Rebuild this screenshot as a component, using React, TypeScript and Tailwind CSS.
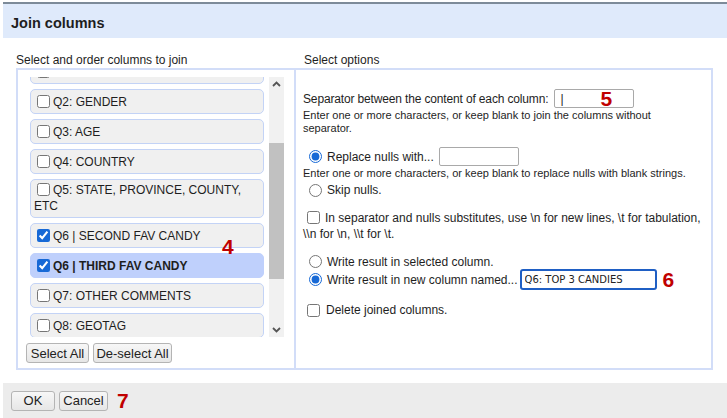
import type { ReactNode } from 'react';

type Column = {
  id: string;
  label: ReactNode;
  checked?: boolean;
  selected?: boolean;
  tall?: boolean;
};

// first row is scrolled mostly out of view, only its checkbox edge shows
const columns: Column[] = [
  { id: 'q1', label: '' },
  { id: 'q2', label: 'Q2: GENDER' },
  { id: 'q3', label: 'Q3: AGE' },
  { id: 'q4', label: 'Q4: COUNTRY' },
  { id: 'q5', label: <>Q5: STATE, PROVINCE, COUNTY,<br />ETC</>, tall: true },
  { id: 'q6b', label: 'Q6 | SECOND FAV CANDY', checked: true },
  { id: 'q6c', label: 'Q6 | THIRD FAV CANDY', checked: true, selected: true },
  { id: 'q7', label: 'Q7: OTHER COMMENTS' },
  { id: 'q8', label: 'Q8: GEOTAG' },
];

const Check = ({ checked = false, className = '' }: { checked?: boolean; className?: string }) => (
  <input
    type="checkbox"
    defaultChecked={checked}
    className={`m-0 w-[13px] h-[13px] shrink-0 accent-[#1769d6] ${className}`}
  />
);

const Radio = ({ checked = false, name }: { checked?: boolean; name: string }) => (
  <input
    type="radio"
    name={name}
    defaultChecked={checked}
    className="m-0 w-[13px] h-[13px] shrink-0 accent-[#1769d6]"
  />
);

const Chevron = ({ up }: { up?: boolean }) => (
  <svg width="9" height="6" viewBox="0 0 9 6" className="block">
    <polyline
      points={up ? '1,5 4.5,1.5 8,5' : '1,1 4.5,4.5 8,1'}
      fill="none"
      stroke="#555"
      strokeWidth="1.8"
    />
  </svg>
);

const Mark = ({ children, className = '' }: { children: ReactNode; className?: string }) => (
  <span className={`text-[21px] leading-[16px] font-bold text-[#c00000] ${className}`}>{children}</span>
);

const DialogButton = ({ children, className = '' }: { children: ReactNode; className?: string }) => (
  <button
    className={`h-[20px] rounded-[3px] border border-[#b4b4b4] bg-gradient-to-b from-[#f7f7f7] to-[#e6e6e6] text-[13px] leading-none text-[#222] ${className}`}
  >
    {children}
  </button>
);

export default function App() {
  return (
    <div className="w-[727px] h-[418px] bg-white pt-[2px] pl-[3px] font-['Liberation_Sans',Arial,sans-serif] text-[#1e1e1e] overflow-hidden">
      {/* Header */}
      <div className="h-[36px] border-t-2 border-[#7d8b99] bg-[#dfeafb] pl-[8px] pt-[5px] flex items-center">
        <h1 className="text-[14.5px] font-bold">Join columns</h1>
      </div>

      {/* Body */}
      <div className="h-[345px] pl-[13px] pt-[15px] flex">
        {/* Left column */}
        <div className="w-[278px] flex flex-col">
          <div className="text-[12px] leading-[14px] h-[15px]">Select and order columns to join</div>
          <div className="h-[302px] border-2 border-r-0 border-[#d2ddf8] pl-[8px] pt-[7px]">
            <div className="ml-[4px] w-[254px] h-[260px] flex gap-[5px]">
              <div className="relative w-[234px] h-full overflow-hidden">
                <div className="flex flex-col gap-[5px] mt-[-18px]">
                  {columns.map((c) =>
                    c.tall ? (
                      <div
                        key={c.id}
                        className="h-[39px] rounded-[5px] border border-[#c3d3f6] bg-[#f0f0f0] pl-[3px] pt-[2px] text-[12px] leading-[16px]"
                      >
                        <Check className="inline-block align-[-2px] ml-[3px] mr-[3px]" />
                        {c.label}
                      </div>
                    ) : (
                      <div
                        key={c.id}
                        className={`h-[25px] shrink-0 rounded-[5px] border flex items-center gap-[3px] pl-[6px] text-[12px] ${
                          c.selected
                            ? 'bg-[#bfd0fc] border-[#bfd0fc] font-bold'
                            : 'bg-[#f0f0f0] border-[#c3d3f6]'
                        }`}
                      >
                        <Check checked={c.checked} />
                        {c.label && <span>{c.label}</span>}
                      </div>
                    )
                  )}
                </div>
                <Mark className="absolute left-[192px] top-[162px]">4</Mark>
              </div>
              {/* Scrollbar */}
              <div className="w-[15px] h-full bg-[#f1f1f1] flex flex-col">
                <div className="h-[14px] flex items-center justify-center">
                  <Chevron up />
                </div>
                <div className="h-[52px]" />
                <div className="h-[136px] bg-[#c1c1c1]" />
                <div className="flex-1" />
                <div className="h-[14px] flex items-center justify-center">
                  <Chevron />
                </div>
              </div>
            </div>
            <div className="mt-[6px] flex gap-[4px]">
              <DialogButton className="w-[63px]">Select All</DialogButton>
              <DialogButton className="w-[79px]">De-select All</DialogButton>
            </div>
          </div>
        </div>

        {/* Right column */}
        <div className="w-[419px] flex flex-col">
          <div className="text-[12px] leading-[14px] h-[15px] pl-[10px]">Select options</div>
          <div className="h-[302px] border-2 border-[#d2ddf8] pl-[7px] pt-[19px] text-[12px]">
            <div className="h-[19px] flex items-center">
              <span className="tracking-[-0.15px]">Separator between the content of each column:</span>
              <div className="relative ml-[6px]">
                <input
                  defaultValue="|"
                  className="w-[80px] h-[19px] border border-[#a9a9a9] rounded-[2px] px-[5px] text-[12px] text-[#222] outline-none"
                />
                <Mark className="absolute left-[46px] top-[2px]">5</Mark>
              </div>
            </div>
            <p className="mt-[1px] text-[11px] leading-[13px]">
              Enter one or more characters, or keep blank to join the columns without
              <br />
              separator.
            </p>

            <div className="mt-[12px] h-[19px] flex items-center pl-[6px] gap-[5px]">
              <Radio name="nulls" checked />
              <span>Replace nulls with...</span>
              <input className="w-[80px] h-[19px] border border-[#a9a9a9] rounded-[2px]" />
            </div>
            <p className="mt-[1px] text-[11px] leading-[13px]">
              Enter one or more characters, or keep blank to replace nulls with blank strings.
            </p>
            <div className="mt-[2px] h-[16px] flex items-center pl-[6px] gap-[5px]">
              <Radio name="nulls" />
              <span>Skip nulls.</span>
            </div>

            <div className="mt-[12px] leading-[16px]">
              <Check className="inline-block align-[-2px] ml-[4px] mr-[5px]" />
              {'In separator and nulls substitutes, use \\n for new lines, \\t for tabulation,'}
              <br />
              {'\\\\n for \\n, \\\\t for \\t.'}
            </div>

            <div className="mt-[12px] h-[15px] flex items-center pl-[6px] gap-[5px]">
              <Radio name="target" />
              <span>Write result in selected column.</span>
            </div>
            <div className="h-[21px] flex items-center pl-[6px] gap-[5px]">
              <Radio name="target" checked />
              <span>Write result in new column named...</span>
              <input
                defaultValue="Q6: TOP 3 CANDIES"
                className="ml-[-3px] w-[137px] h-[21px] border-2 border-[#1f5fc4] rounded-[3px] px-[3px] font-['DejaVu_Sans',sans-serif] text-[10px] text-[#222] outline-none"
              />
              <Mark className="ml-[1px]">6</Mark>
            </div>

            <div className="mt-[12px] h-[16px] flex items-center pl-[4px] gap-[6px]">
              <Check />
              <span>Delete joined columns.</span>
            </div>
          </div>
        </div>
      </div>

      {/* Footer */}
      <div className="h-[35px] bg-[#ececec] pl-[8px] flex items-center gap-[4px]">
        <DialogButton className="w-[44px]">OK</DialogButton>
        <DialogButton className="w-[49px]">Cancel</DialogButton>
        <Mark className="ml-[5px]">7</Mark>
      </div>
    </div>
  );
}
